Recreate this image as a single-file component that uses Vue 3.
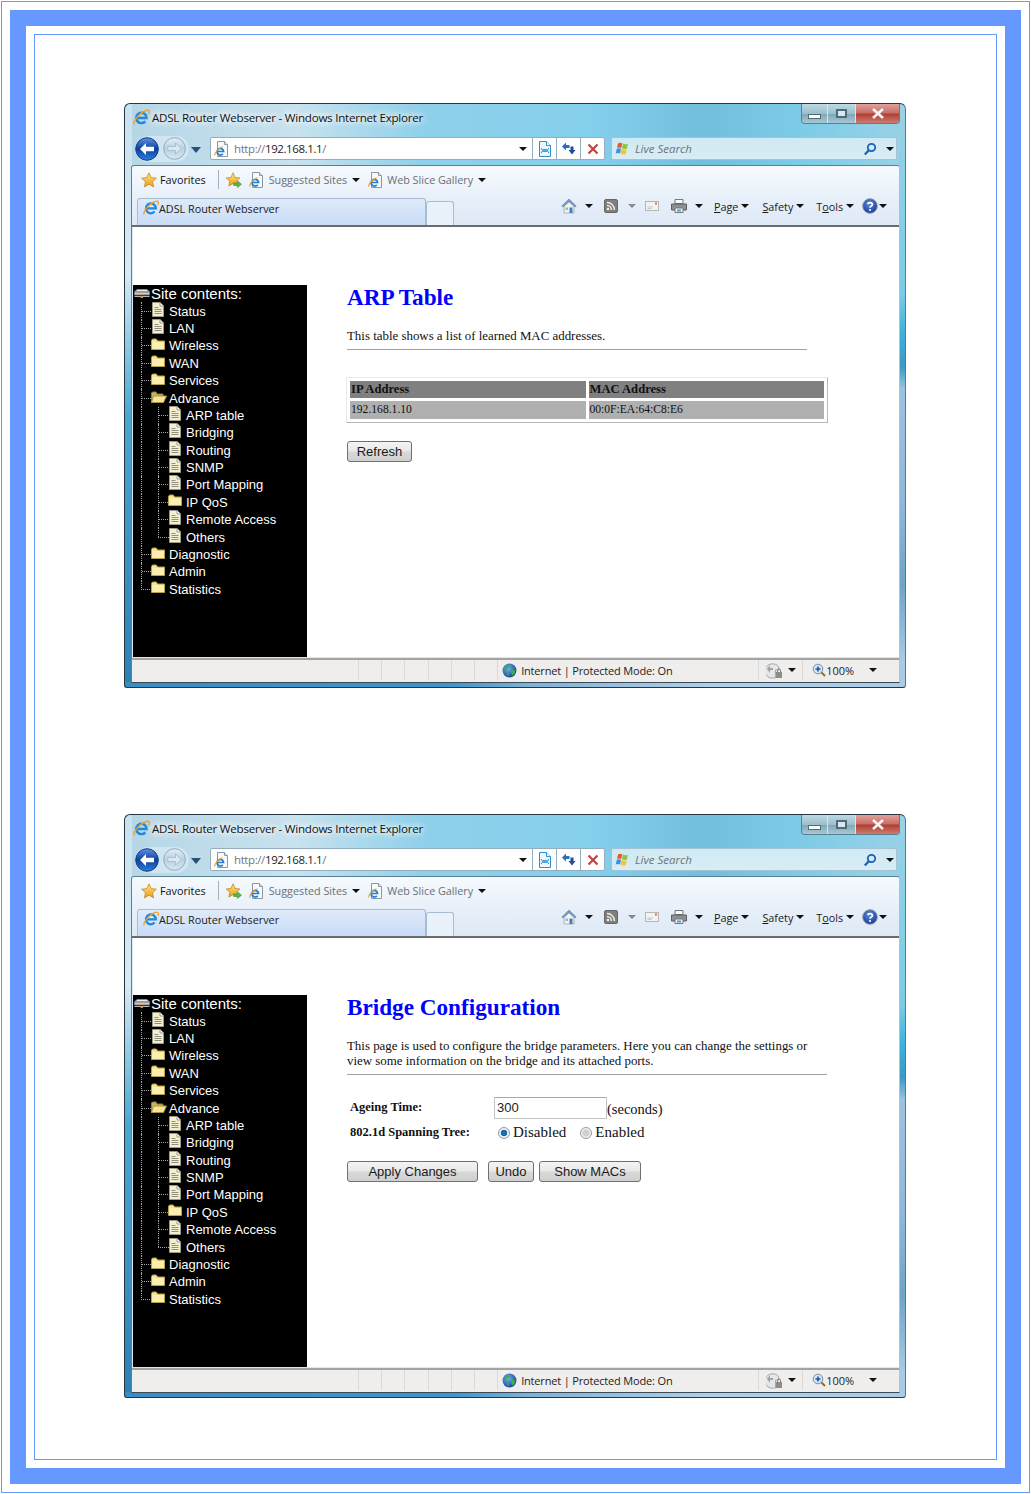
<template>
  <div class="sheet">
    <!-- icon sprite -->
    <svg class="sprite" aria-hidden="true">
      <defs>
        <linearGradient id="gBack" x1="0" y1="0" x2="0" y2="1">
          <stop offset="0" stop-color="#5f93e0" />
          <stop offset=".5" stop-color="#0d3f9e" />
          <stop offset="1" stop-color="#2f7fe0" />
        </linearGradient>
        <linearGradient id="gFwd" x1="0" y1="0" x2="0" y2="1">
          <stop offset="0" stop-color="#e2eef6" />
          <stop offset=".5" stop-color="#b9d2e2" />
          <stop offset="1" stop-color="#d6e7f2" />
        </linearGradient>
        <linearGradient id="gStar" x1="0" y1="0" x2="0" y2="1">
          <stop offset="0" stop-color="#ffe88a" />
          <stop offset="1" stop-color="#eb9a14" />
        </linearGradient>
        <radialGradient id="gGlobe" cx=".4" cy=".35" r=".7">
          <stop offset="0" stop-color="#6fb4ec" />
          <stop offset="1" stop-color="#123f92" />
        </radialGradient>
        <radialGradient id="gHelp" cx=".45" cy=".35" r=".7">
          <stop offset="0" stop-color="#5d8fe0" />
          <stop offset="1" stop-color="#12348f" />
        </radialGradient>
      </defs>
      <symbol id="ie" viewBox="0 0 16 16">
        <path d="M4 8.4h8.8A4.9 4.9 0 1 0 11.6 11.6" fill="none" stroke="#2288dc" stroke-width="2.3" />
        <path d="M1.2 14.6C-.3 11.5 7 3 12.5 1.4c3-.8 3.6 1.2 2.2 3.6" fill="none" stroke="#eda32a" stroke-width="1.3" />
      </symbol>
      <symbol id="pageIe" viewBox="0 0 16 16">
        <path d="M3.5.5h7l3 3v12h-10z" fill="#f8f9fb" stroke="#8b97a6" />
        <path d="M10.5.5v3h3" fill="#dfe5ec" stroke="#8b97a6" />
        <path d="M3 10.5h6.6A3.3 3.3 0 1 0 8.8 12.9" fill="none" stroke="#1f7fd4" stroke-width="1.7" />
        <path d="M.8 14.6C0 12.5 4.5 7 8.5 5.8" fill="none" stroke="#eda32a" stroke-width="1.1" />
      </symbol>
      <symbol id="star" viewBox="0 0 16 16">
        <path d="M8 .8l2.2 4.8 5.2.6-3.9 3.5 1.1 5.2L8 12.2l-4.6 2.7 1.100-5.200L.6 6.200l5.200-.6z" fill="url(#gStar)" stroke="#c98a1c" stroke-width=".8" />
      </symbol>
      <symbol id="starAdd" viewBox="0 0 16 16">
        <path d="M7 .8l2 4.600 4.800.6-3.600 3.200 1 4.800L7 11.600l-4.200 2.400 1-4.800L.2 6l4.800-.6z" fill="url(#gStar)" stroke="#c98a1c" stroke-width=".8" />
        <path d="M7.5 11h4V8.800l4 3.400-4 3.400V13.400h-4z" fill="#58b948" stroke="#2f8a2c" stroke-width=".5" />
      </symbol>
      <symbol id="docLeaf" viewBox="0 0 12 15">
        <path d="M.5.5h7.500l3.500 3.500v10.500H.5z" fill="#f4efcf" stroke="#9a9a86" />
        <path d="M8 .5V4h3.500" fill="#fff" stroke="#9a9a86" />
        <path d="M2.500 5.500h4M2.500 7.500h7M2.500 9.500h7M2.500 11.500h7" stroke="#8f8f80" />
      </symbol>
      <symbol id="folder" viewBox="0 0 14 12">
        <path d="M.5 2.500V11.500h13V3H6.500L5.300 1H1.500z" fill="#f7e594" stroke="#b5a248" />
        <path d="M1.500 4h11.500v7H1.500z" fill="#fbeeb0" />
      </symbol>
      <symbol id="folderOpen" viewBox="0 0 16 12">
        <path d="M.5 2V11.500h11.500V3H6L5 1H1.500z" fill="#c9b464" stroke="#8e7d34" />
        <path d="M2.500 5H15.500l-3 6.500H.5z" fill="#f5e49a" stroke="#a9953e" />
      </symbol>
      <symbol id="root" viewBox="0 0 16 10">
        <path d="M3 .5h10l2.500 2.500H.5z" fill="#ececec" stroke="#8a8a8a" />
        <path d="M.5 3h15v3H.5z" fill="#c9c9c9" stroke="#777" />
        <path d="M.5 7.500h15" stroke="#b5b5b5" />
        <path d="M6.500 7h2.500v2H6.500z" fill="#e8912a" />
      </symbol>
      <symbol id="globe" viewBox="0 0 16 16">
        <circle cx="8" cy="8" r="7.4" fill="url(#gGlobe)" />
        <path d="M3.500 3.500c2-1.500 4-1.500 5-.5l-1 2-2 .5-.5 2.500-2-1zM9.500 7l4 .5.500 2.500-2.500 3.500-1.500-2.500zM5 10l2 1 .5 3-2-1z" fill="#3fae49" />
      </symbol>
      <symbol id="home" viewBox="0 0 16 16">
        <path d="M.8 8L8 1l7.200 7-1.200 1L8 3.400 2 9z" fill="#6f9fd0" stroke="#4a6f9e" stroke-width=".5" />
        <path d="M3 8.500L8 4l5 4.500V15H3z" fill="#f2f2ee" stroke="#8d8d88" stroke-width=".6" />
        <path d="M8.500 9.500h3V15h-3z" fill="#3d7fc0" />
        <path d="M4.500 9.500h2.500V12H4.500z" fill="#8cbbe0" />
      </symbol>
      <symbol id="feed" viewBox="0 0 14 14">
        <rect x=".5" y=".5" width="13" height="13" rx="1.5" fill="#807f7c" stroke="#666" />
        <circle cx="4" cy="10" r="1.3" fill="#eee" />
        <path d="M3 6.500a4.500 4.500 0 0 1 4.500 4.500M3 3.500a7.500 7.500 0 0 1 7.500 7.500" fill="none" stroke="#eee" stroke-width="1.4" />
      </symbol>
      <symbol id="mail" viewBox="0 0 14 10">
        <rect x=".5" y=".5" width="13" height="9" fill="#f2f2f0" stroke="#b6b6b2" />
        <path d="M2.500 6h5M2.500 7.500h4" stroke="#c6c6c2" />
        <rect x="10" y="1.500" width="2" height="2" fill="#d86a5e" />
      </symbol>
      <symbol id="printer" viewBox="0 0 16 14">
        <path d="M4 .5h8v4H4z" fill="#fafafa" stroke="#777" />
        <path d="M.5 5h15v6H.5z" fill="#8c8f93" stroke="#5c5f63" />
        <path d="M4 9h8v4.500H4z" fill="#f2f6fa" stroke="#777" />
        <path d="M6 10.500h4v2H6z" fill="#4f9ad4" />
      </symbol>
      <symbol id="help" viewBox="0 0 16 16">
        <circle cx="8" cy="8" r="7.3" fill="url(#gHelp)" stroke="#8d97a6" stroke-width="1" />
        <path d="M5.800 6.200C6 4.200 10.400 4 10.400 6.400c0 1.800-2.400 1.700-2.400 3.400" fill="none" stroke="#fff" stroke-width="1.7" />
        <circle cx="8" cy="12" r="1.1" fill="#fff" />
      </symbol>
      <symbol id="flag" viewBox="0 0 16 16">
        <path d="M3 2.500c1.500-1 3-.8 4.300-.2L6.200 7C5 6.400 3.500 6.300 2 7z" fill="#e8572a" />
        <path d="M8 2.500c1.800.9 3.300 1 5 .2L11.900 7.400c-1.700.8-3.200.7-5-.2z" fill="#8cc63f" />
        <path d="M1.800 7.800c1.500-.7 3-.6 4.300 0L5 12.500c-1.300-.7-2.800-.7-4.300 0z" fill="#3b93e0" />
        <path d="M6.700 8.100c1.800.9 3.300 1 5 .2L10.600 13c-1.700.8-3.200.7-5-.2z" fill="#f7c325" />
      </symbol>
      <symbol id="lens" viewBox="0 0 14 14">
        <circle cx="8.500" cy="5.500" r="3.700" fill="none" stroke="#1e5fb5" stroke-width="1.8" />
        <path d="M5.800 8.200L1.800 12.500" stroke="#1e5fb5" stroke-width="2.2" />
      </symbol>
      <symbol id="compat" viewBox="0 0 14 16">
        <path d="M1.500.5h7l4 4v11h-11z" fill="#eaf5fc" stroke="#2d8fd0" />
        <path d="M8.500.5v4h4" fill="#fff" stroke="#2d8fd0" />
        <path d="M3 7l3 4 2-3 3 4M3 12l3-4 2 3 3-4" fill="none" stroke="#2d8fd0" />
      </symbol>
      <symbol id="reload" viewBox="0 0 16 16">
        <path d="M1 5.500L5 1.500v2.500h3.500V7H5v2.500z" fill="#2b6fc0" />
        <path d="M14.500 9l-3.500 4.500-3.500-4.500h2V5.500h3V9z" fill="#1d4f9e" />
      </symbol>
      <symbol id="stop" viewBox="0 0 12 12">
        <path d="M1.500 1.500l9 9M10.500 1.500l-9 9" stroke="#c8413c" stroke-width="2.2" />
      </symbol>
      <symbol id="shield" viewBox="0 0 18 18">
        <path d="M8 3a5 5 0 0 1 5 5v1H9.500v8H4.500A7 7 0 0 1 8 3z" fill="#e4e7ea" stroke="#a6a9ac" />
        <path d="M1 8l3-4v3h3v2H4v3z" fill="#9fa3a7" />
        <path d="M10 11h6v6h-6z" fill="#8e8c86" />
        <path d="M11.500 11V9.500a1.500 1.500 0 0 1 3 0V11" fill="none" stroke="#77756f" />
      </symbol>
      <symbol id="zoomIn" viewBox="0 0 14 14">
        <circle cx="6" cy="6" r="4.8" fill="#d3e6f6" stroke="#7d8ea0" />
        <path d="M3.500 6h5M6 3.500v5" stroke="#1f56ad" stroke-width="1.7" />
        <path d="M9.500 9.500l3.500 3.500" stroke="#8c6d3d" stroke-width="2" />
      </symbol>
    </svg>

    <div class="frame-thick">
      <div class="frame-inner">
        <section v-for="win in windows" :key="win.id" class="win" :class="'win-' + win.id">
          <div class="titlebar">
            <svg class="ico-title"><use href="#ie" /></svg>
            <span class="title-text">ADSL Router Webserver - Windows Internet Explorer</span>
            <div class="controls">
              <span class="ctl ctl-min"><i></i></span>
              <span class="ctl ctl-max"><i></i></span>
              <span class="ctl ctl-close">
                <svg width="14" height="11" viewBox="0 0 14 11"><path d="M2 1l10 9M12 1L2 10" stroke="#f4f4f4" stroke-width="2.6" /></svg>
              </span>
            </div>
          </div>

          <div class="navbar">
            <div class="nav-pill">
              <span class="nav-btn">
                <svg width="24" height="24" viewBox="0 0 24 24">
                  <circle cx="12" cy="12" r="11.3" fill="url(#gBack)" stroke="#123e86" />
                  <path d="M5 12l6-6v3.800h8v4.400h-8V18z" fill="#fff" />
                </svg>
              </span>
              <span class="nav-btn">
                <svg width="23" height="23" viewBox="0 0 24 24">
                  <circle cx="12" cy="12" r="11.3" fill="url(#gFwd)" stroke="#8fa9bd" />
                  <path d="M19 12l-6-6v3.800H5v4.400h8V18z" fill="#dbe8f1" stroke="#a4bccd" />
                </svg>
              </span>
            </div>
            <span class="nav-drop"></span>
            <div class="address">
              <svg class="ico16"><use href="#pageIe" /></svg>
              <span class="url"><span class="dim">http://</span>192.168.1.1<span class="dim">/</span></span>
              <span class="arrow addr-arrow"></span>
              <span class="addr-btn"><svg width="14" height="16"><use href="#compat" /></svg></span>
              <span class="addr-btn"><svg class="ico16"><use href="#reload" /></svg></span>
              <span class="addr-btn"><svg width="12" height="12"><use href="#stop" /></svg></span>
            </div>
            <div class="search">
              <svg class="ico16"><use href="#flag" /></svg>
              <span class="search-text">Live Search</span>
              <svg class="search-lens" width="14" height="14"><use href="#lens" /></svg>
              <span class="arrow search-arrow"></span>
            </div>
          </div>

          <div class="panel">
            <div class="favbar">
              <svg class="ico16 fav-star"><use href="#star" /></svg>
              <span class="fav-text">Favorites</span>
              <span class="fav-sep"></span>
              <svg class="ico16 fav-add"><use href="#starAdd" /></svg>
              <svg class="ico16 fav-page"><use href="#pageIe" /></svg>
              <span class="fav-link">Suggested Sites</span>
              <span class="arrow fav-arrow"></span>
              <svg class="ico16 fav-page2"><use href="#pageIe" /></svg>
              <span class="fav-link">Web Slice Gallery</span>
              <span class="arrow fav-arrow"></span>
            </div>
            <div class="tabbar">
              <div class="tab">
                <svg class="ico16"><use href="#ie" /></svg>
                <span class="tab-text">ADSL Router Webserver</span>
              </div>
              <div class="tab-new"></div>
              <div class="cmds">
                <svg class="ico16 c-home"><use href="#home" /></svg>
                <span class="arrow c-a1"></span>
                <svg class="c-feed" width="14" height="14"><use href="#feed" /></svg>
                <span class="arrow arrow-dim c-a2"></span>
                <svg class="c-mail" width="14" height="10"><use href="#mail" /></svg>
                <svg class="c-print" width="16" height="14"><use href="#printer" /></svg>
                <span class="arrow c-a3"></span>
                <span class="cmd c-page"><u>P</u>age</span>
                <span class="arrow c-a4"></span>
                <span class="cmd c-safety"><u>S</u>afety</span>
                <span class="arrow c-a4"></span>
                <span class="cmd c-tools">T<u>o</u>ols</span>
                <span class="arrow c-a4"></span>
                <svg class="ico16 c-help"><use href="#help" /></svg>
                <span class="arrow c-a5"></span>
              </div>
            </div>

            <div class="page">
              <div class="page-row">
                <nav class="tree">
                  <div class="node node-root">
                    <svg class="ico-root" width="16" height="10"><use href="#root" /></svg>
                    <span>Site contents:</span>
                  </div>
                  <div v-for="(item, i) in treeItems" :key="i" class="node">
                    <span v-if="item.sub" class="guide"></span>
                    <span class="elbow" :class="{ last: item.name === 'Statistics' || item.name === 'Others' }"></span>
                    <svg v-if="item.type === 'doc'" class="ico-doc" width="12" height="15"><use href="#docLeaf" /></svg>
                    <svg v-else-if="item.type === 'open'" class="ico-open" width="16" height="12"><use href="#folderOpen" /></svg>
                    <svg v-else class="ico-folder" width="14" height="12"><use href="#folder" /></svg>
                    <span class="node-text">{{ item.name }}</span>
                  </div>
                </nav>

                <main v-if="win.id === 'arp'" class="content">
                  <h1>ARP Table</h1>
                  <p class="intro">This table shows a list of learned MAC addresses.</p>
                  <hr class="rule rule-short" />
                  <table class="arp">
                    <thead>
                      <tr><th>IP Address</th><th>MAC Address</th></tr>
                    </thead>
                    <tbody>
                      <tr><td>192.168.1.10</td><td>00:0F:EA:64:C8:E6</td></tr>
                    </tbody>
                  </table>
                  <div class="btn-row btn-row-arp">
                    <button class="btn btn-refresh">Refresh</button>
                  </div>
                </main>

                <main v-else class="content">
                  <h1>Bridge Configuration</h1>
                  <p class="intro">This page is used to configure the bridge parameters. Here you can change the settings or<br />view some information on the bridge and its attached ports.</p>
                  <hr class="rule" />
                  <div class="form">
                    <label class="form-label">Ageing Time:</label>
                    <div class="form-field">
                      <input class="text-input" type="text" value="300" />
                      <span class="unit">(seconds)</span>
                    </div>
                    <label class="form-label">802.1d Spanning Tree:</label>
                    <div class="form-field radios">
                      <span class="radio radio-on"></span><span class="radio-label">Disabled</span>
                      <span class="radio radio-off"></span><span class="radio-label">Enabled</span>
                    </div>
                  </div>
                  <div class="btn-row btn-row-bridge">
                    <button class="btn btn-apply">Apply Changes</button>
                    <button class="btn btn-undo">Undo</button>
                    <button class="btn btn-macs">Show MACs</button>
                  </div>
                </main>
              </div>
            </div>

            <footer class="status">
              <span class="st-blank"></span>
              <span v-for="n in 6" :key="n" class="st-cell"></span>
              <span class="st-zone">
                <svg class="ico-globe"><use href="#globe" /></svg>
                <span class="st-text">Internet | Protected Mode: On</span>
              </span>
              <span class="st-shield">
                <svg width="18" height="18"><use href="#shield" /></svg>
                <span class="arrow st-arrow"></span>
              </span>
              <span class="st-zoom">
                <svg width="14" height="14"><use href="#zoomIn" /></svg>
                <span>100%</span>
                <span class="arrow st-arrow2"></span>
              </span>
            </footer>
          </div>
        </section>
      </div>
    </div>
  </div>
</template>

<script setup>
const windows = [{ id: 'arp' }, { id: 'bridge' }]

const treeItems = [
  { name: 'Status', type: 'doc' },
  { name: 'LAN', type: 'doc' },
  { name: 'Wireless', type: 'folder' },
  { name: 'WAN', type: 'folder' },
  { name: 'Services', type: 'folder' },
  { name: 'Advance', type: 'open' },
  { name: 'ARP table', type: 'doc', sub: true },
  { name: 'Bridging', type: 'doc', sub: true },
  { name: 'Routing', type: 'doc', sub: true },
  { name: 'SNMP', type: 'doc', sub: true },
  { name: 'Port Mapping', type: 'doc', sub: true },
  { name: 'IP QoS', type: 'folder', sub: true },
  { name: 'Remote Access', type: 'doc', sub: true },
  { name: 'Others', type: 'doc', sub: true },
  { name: 'Diagnostic', type: 'folder' },
  { name: 'Admin', type: 'folder' },
  { name: 'Statistics', type: 'folder' }
]
</script>

<style>
html,
body {
  margin: 0;
  background: #fff;
}
</style>

<style scoped>
.sprite {
  display: block;
  width: 0;
  height: 0;
}

/* page borders */
.sheet {
  box-sizing: border-box;
  width: 1029px;
  height: 1492px;
  margin: 1px 0 0 1px;
  padding: 8px;
  border: 1px solid #6699ff;
  background: #fff;
}

.frame-thick {
  box-sizing: border-box;
  height: 100%;
  padding: 8px;
  border: 16px solid #6699ff;
}

.frame-inner {
  box-sizing: border-box;
  height: 100%;
  padding: 68px 0 0 89px;
  border: 1px solid #6699ff;
}

/* IE window */
.win {
  box-sizing: border-box;
  display: flex;
  flex-direction: column;
  width: 782px;
  height: 585px;
  margin-bottom: 126px;
  border: 1px solid #28363f;
  border-right-color: #54788e;
  border-radius: 6px 6px 3px 3px;
  background:
    linear-gradient(90deg, #3a8dc4 0, #3f96cc 42%, #7fb2d8 52%, #b0cfe8 75%, #a8cce8 100%) 0 100% / 100% 5px no-repeat,
    linear-gradient(180deg, #c8e2ee 0, #d8eaf4 170px, #4aa8d0 310px, #2f7fb5 100%) 0 0 / 7px 100% no-repeat,
    linear-gradient(180deg, #98d2e6 0, #7ccbe6 190px, #3fb0d8 230px, #3a9ac4 262px, #9cc2e2 285px, #8fb8da 400px, #6fa4c8 480px, #a8cce8 560px) 100% 0 / 6px 100% no-repeat,
    linear-gradient(90deg, #b5d6e6 0, #c8e2ee 22%, #8fd0ea 38%, #84cfec 60%, #72bedd 74%, #7ccbe6 86%, #98d2e6 100%);
  font-family: 'Open Sans', 'Noto Sans', sans-serif;
  color: #1a1a1a;
}

.win-bridge {
  height: 584px;
}

.titlebar {
  display: flex;
  flex: none;
  align-items: flex-start;
  height: 28px;
  padding-left: 8px;
}

.ico-title {
  width: 17px;
  height: 17px;
  margin-top: 5px;
}

.title-text {
  margin: 6px 0 0 2px;
  font-size: 11.6px;
  letter-spacing: -0.245px;
  line-height: 15px;
  color: #111;
  text-shadow: 0 0 6px #fff, 0 0 8px #fff, 0 0 10px #fff;
}

.controls {
  display: flex;
  height: 19px;
  margin-left: auto;
  margin-right: 5px;
  border: 1px solid #5a7f90;
  border-top: 0;
  border-radius: 0 0 4px 4px;
  overflow: hidden;
}

.ctl {
  display: flex;
  align-items: center;
  justify-content: center;
  height: 100%;
}

.ctl-min {
  width: 25px;
  border-right: 1px solid #d5e8ee;
  background: linear-gradient(180deg, #bed9e3 0, #9cbfcd 50%, #7ea6b6 52%, #a8c8d4 100%);
}

.ctl-min i {
  display: block;
  width: 11px;
  height: 3px;
  margin-top: 5px;
  background: #fff;
  border: 1px solid #4f6b78;
}

.ctl-max {
  width: 27px;
  background: linear-gradient(180deg, #bed9e3 0, #9cbfcd 50%, #7ea6b6 52%, #a8c8d4 100%);
}

.ctl-max i {
  display: block;
  width: 7px;
  height: 5px;
  border: 2px solid #4f6b78;
  background: #d7e8ee;
}

.ctl-close {
  width: 43px;
  border-left: 1px solid #d5e8ee;
  background: linear-gradient(180deg, #e0a19c 0, #c96d64 48%, #ad3d32 52%, #cf7b70 100%);
}

/* nav row */
.navbar {
  display: flex;
  flex: none;
  align-items: center;
  height: 33px;
  padding-left: 10px;
}

.nav-pill {
  display: flex;
  align-items: center;
  gap: 4px;
  width: 54px;
  height: 26px;
  border-radius: 13px;
  background: rgba(225, 240, 248, 0.55);
}

.nav-btn {
  display: flex;
}

.nav-drop {
  width: 0;
  height: 0;
  margin: 2px 0 0 2px;
  border: 5px solid transparent;
  border-top: 6px solid #27517a;
  border-bottom: 0;
}

.address {
  display: flex;
  align-items: center;
  box-sizing: border-box;
  width: 395px;
  height: 23px;
  margin-left: 9px;
  padding-left: 3px;
  border: 1px solid #94adbf;
  border-radius: 2px;
  background: #fff;
}

.ico16 {
  flex: none;
  width: 16px;
  height: 16px;
}

.url {
  margin-left: 4px;
  font-size: 11.5px;
  letter-spacing: -0.4px;
  color: #222;
}

.dim {
  color: #777;
}

.arrow {
  flex: none;
  display: inline-block;
  width: 0;
  height: 0;
  border: 4px solid transparent;
  border-top: 4px solid #111;
  border-bottom: 0;
}

.arrow-dim {
  border-top-color: #888;
}

.addr-arrow {
  margin: 0 5px 0 auto;
}

.addr-btn {
  box-sizing: border-box;
  display: flex;
  align-items: center;
  justify-content: center;
  width: 24px;
  height: 100%;
  border-left: 1px solid #94adbf;
}

.search {
  display: flex;
  align-items: center;
  box-sizing: border-box;
  width: 286px;
  height: 23px;
  margin-left: 6px;
  padding-left: 3px;
  border: 1px solid #a4c4d6;
  border-radius: 2px;
  background: linear-gradient(180deg, #cfe9f3, #d8edf5);
}

.search-text {
  margin-left: 4px;
  font-size: 11.5px;
  font-style: italic;
  color: #6d7378;
}

.search-lens {
  margin-left: auto;
}

.search-arrow {
  margin: 0 2px 0 9px;
}

/* toolbars */
.panel {
  box-sizing: border-box;
  display: flex;
  flex: 1;
  flex-direction: column;
  min-height: 0;
  margin: 0 5px 4px 6px;
  border: 1px solid #5d7f94;
  border-left-color: #6f7a82;
  border-right-color: #b4c2cc;
  border-bottom-color: #3b4a55;
  border-radius: 3px 3px 0 0;
  background: linear-gradient(180deg, #f6fafe 0, #e8f0f9 30px, #dde9f6 60px);
}

.favbar {
  box-sizing: border-box;
  display: flex;
  flex: none;
  align-items: center;
  height: 30px;
  padding: 0 0 3px 9px;
  font-size: 10.8px;
}

.fav-text {
  margin-left: 3px;
  color: #111;
}

.fav-sep {
  width: 1px;
  height: 19px;
  margin-left: 12px;
  background: #a3afbb;
}

.fav-add {
  margin-left: 7px;
}

.fav-page {
  margin-left: 7px;
}

.fav-page2 {
  margin-left: 8px;
}

.fav-link {
  margin-left: 3px;
  color: #6b6f74;
}

.fav-page + .fav-link {
  margin-left: 4px;
}

.fav-arrow {
  margin-left: 5px;
}

.tabbar {
  box-sizing: border-box;
  display: flex;
  flex: none;
  align-items: flex-end;
  height: 31px;
  padding-left: 5px;
  border-bottom: 2px solid #6b6b6b;
}

.tab {
  display: flex;
  align-items: center;
  box-sizing: border-box;
  width: 289px;
  height: 27px;
  padding: 0 0 8px 5px;
  border: 1px solid #a9bdd0;
  border-bottom: 0;
  border-radius: 3px 3px 0 0;
  background: linear-gradient(180deg, #dfeafa 0, #c8dcf6 100%);
}

.tab-text {
  font-size: 10.8px;
  color: #1a1a1a;
}

.tab-new {
  box-sizing: border-box;
  width: 28px;
  height: 24px;
  border: 1px solid #a9bdd0;
  border-bottom: 0;
  border-radius: 3px 3px 0 0;
  background: #e9f1fa;
}

.cmds {
  box-sizing: border-box;
  display: flex;
  align-items: center;
  height: 29px;
  margin-left: 107px;
  padding-bottom: 9px;
  font-size: 10.8px;
}

.cmd u {
  text-decoration: underline;
}

.c-a1 { margin-left: 8px; }
.c-feed { margin-left: 11px; }
.c-a2 { margin-left: 10px; }
.c-mail { margin-left: 9px; }
.c-print { margin-left: 12px; }
.c-a3 { margin-left: 8px; }
.c-page { margin-left: 11px; }
.c-a4 { margin-left: 3px; }
.c-safety { margin-left: 13px; }
.c-tools { margin-left: 12px; }
.c-help { margin-left: 8px; }
.c-a5 { margin-left: 1px; }

/* page inside the browser */
.page {
  flex: none;
  box-sizing: border-box;
  height: 431px;
  margin-left: 1px;
  padding-top: 58px;
  background: #fff;
  border-bottom: 1px solid #e6e6e6;
}

.win-bridge .page {
  height: 430px;
  padding-top: 57px;
}

.page-row {
  display: flex;
  height: 372px;
}

.tree {
  box-sizing: border-box;
  flex: none;
  width: 174px;
  height: 372px;
  background: #000;
  color: #fff;
  font-family: 'Liberation Sans', Arial, sans-serif;
  font-size: 13px;
}

.node {
  display: flex;
  align-items: center;
  height: 17.4px;
}

.node-root {
  font-size: 15px;
}

.ico-root {
  margin: 0 1px 0 1px;
}

.guide {
  flex: none;
  align-self: stretch;
  box-sizing: border-box;
  width: 17px;
  margin-left: 8px;
  border-left: 1px dotted #a8a8a8;
}

.elbow {
  flex: none;
  align-self: stretch;
  box-sizing: border-box;
  width: 11px;
  margin-left: 8px;
  border-left: 1px dotted #a8a8a8;
  background: repeating-linear-gradient(90deg, #a8a8a8 0 1px, transparent 1px 2px) 0 50% / 100% 1px no-repeat;
}

.guide + .elbow {
  margin-left: 0;
}

.elbow.last {
  border-left: 0;
  background:
    repeating-linear-gradient(90deg, #a8a8a8 0 1px, transparent 1px 2px) 0 50% / 100% 1px no-repeat,
    repeating-linear-gradient(180deg, #a8a8a8 0 1px, transparent 1px 2px) 0 0 / 1px 50% no-repeat;
}

.ico-doc {
  margin: -4px 5px 0 0;
}

.ico-folder {
  margin: -4px 4px 0 -1px;
}

.ico-open {
  margin: -3px 2px 0 -1px;
}

.node-text {
  white-space: nowrap;
}

.content {
  width: 480px;
  margin-left: 40px;
  font-family: 'Liberation Serif', 'Times New Roman', serif;
  color: #111;
}

.content h1 {
  margin: -1px 0 0;
  font-size: 23.2px;
  line-height: 26px;
  color: #0000ff;
}

.intro {
  margin: 19px 0 0;
  font-size: 12.9px;
  line-height: 15px;
}

.rule {
  height: 0;
  margin: 5px 0 0;
  border: 0;
  border-top: 1px solid #a0a0a0;
}

.rule-short {
  width: 460px;
}

/* ARP table */
.arp {
  box-sizing: border-box;
  width: 482px;
  margin: 27px 0 0 -1px;
  border: 1px solid #e8e8e8;
  border-right-color: #b8b8b8;
  border-bottom-color: #b8b8b8;
  border-spacing: 3px 3px;
  table-layout: fixed;
}

.arp th {
  height: 17px;
  padding: 0 0 0 1px;
  background: #808080;
  text-align: left;
  font-size: 12.6px;
  font-weight: 700;
  line-height: 17px;
}

.arp td {
  height: 18px;
  padding: 0 0 0 1px;
  background: #b0b0b0;
  font-size: 11.6px;
  line-height: 18px;
}

.btn-row {
  display: flex;
}

.btn-row-arp {
  margin-top: 18px;
}

.btn-row-bridge {
  margin-top: 16px;
}

.btn {
  box-sizing: border-box;
  height: 21px;
  margin: 0;
  padding: 0 0 1px;
  border: 1px solid #707070;
  border-radius: 3px;
  background: linear-gradient(180deg, #f4f4f4 0, #e8e8e8 48%, #d8d8d8 52%, #cfcfcf 100%);
  font-family: 'Liberation Sans', Arial, sans-serif;
  font-size: 13px;
  color: #1a1a1a;
}

.btn-refresh { width: 65px; }
.btn-apply { width: 131px; }
.btn-undo { width: 46px; margin-left: 10px; }
.btn-macs { width: 102px; margin-left: 5px; }

/* bridge form */
.form {
  display: grid;
  grid-template-columns: 144px 1fr;
  grid-auto-rows: 25px;
  align-items: center;
  margin-top: 20px;
  padding-left: 3px;
}

.form-label {
  font-size: 12.5px;
  font-weight: 700;
}

.form-field {
  display: flex;
  align-items: center;
}

.text-input {
  box-sizing: border-box;
  width: 113px;
  height: 22px;
  margin: 0;
  padding: 0 2px;
  border: 1px solid #c4c4c4;
  border-top-color: #a8a8a8;
  border-radius: 1px;
  background: #fff;
  font-family: 'Liberation Sans', Arial, sans-serif;
  font-size: 13px;
  color: #222;
}

.unit {
  margin-top: 4px;
  font-size: 14.5px;
}

.radios {
  padding-left: 4px;
  font-size: 15px;
}

.radio {
  box-sizing: border-box;
  flex: none;
  width: 12px;
  height: 12px;
  border: 1px solid #9a9a9a;
  border-radius: 50%;
  background: #e8e8e8;
}

.radio-on {
  border: 1px solid #8a9aa6;
  background: radial-gradient(circle, #1b6ea8 0 3px, #eef2f5 3.6px);
}

.radio-off {
  margin-left: 14px;
  background: radial-gradient(circle, #cfcfcf 0 3px, #f0f0f0 4px);
}

.radio-label {
  margin-left: 3px;
}

/* status bar */
.status {
  box-sizing: border-box;
  display: flex;
  flex: none;
  align-items: stretch;
  height: 24px;
  padding-bottom: 2px;
  border-top: 2px solid #a3a3a3;
  background: #f0eeec;
  font-size: 11px;
  color: #222;
}

.st-blank {
  width: 226px;
}

.st-cell {
  box-sizing: border-box;
  width: 23.2px;
  border-left: 1px solid #dcdad8;
}

.st-zone {
  display: flex;
  align-items: center;
  box-sizing: border-box;
  width: 261px;
  padding-left: 4px;
  border-left: 1px solid #dcdad8;
}

.ico-globe {
  width: 15px;
  height: 15px;
  margin-right: 4px;
}

.st-text {
  letter-spacing: -0.17px;
}

.st-shield {
  display: flex;
  align-items: center;
  box-sizing: border-box;
  width: 44px;
  padding-left: 7px;
  border-left: 1px solid #dcdad8;
}

.st-arrow {
  margin-left: 4px;
}

.st-zoom {
  display: flex;
  align-items: center;
  box-sizing: border-box;
  flex: 1;
  padding-left: 9px;
  border-left: 1px solid #dcdad8;
}

.st-arrow2 {
  margin-left: 15px;
}
</style>
